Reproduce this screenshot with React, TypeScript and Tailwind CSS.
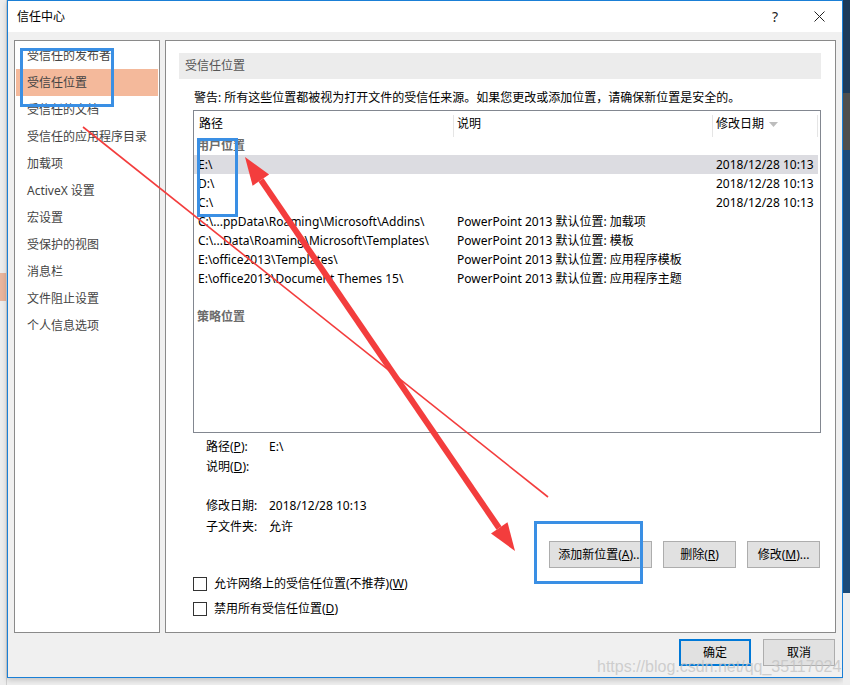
import React from 'react'

const navItems = [
  '受信任的发布者',
  '受信任位置',
  '受信任的文档',
  '受信任的应用程序目录',
  '加载项',
  'ActiveX 设置',
  '宏设置',
  '受保护的视图',
  '消息栏',
  '文件阻止设置',
  '个人信息选项',
]

const date = '2018/12/28 10:13'

const rows = [
  { path: 'E:\\', desc: '', date, selected: true },
  { path: 'D:\\', desc: '', date },
  { path: 'C:\\', desc: '', date },
  { path: 'C:\\...ppData\\Roaming\\Microsoft\\Addins\\', desc: 'PowerPoint 2013 默认位置: 加载项', date: '' },
  { path: 'C:\\...Data\\Roaming\\Microsoft\\Templates\\', desc: 'PowerPoint 2013 默认位置: 模板', date: '' },
  { path: 'E:\\office2013\\Templates\\', desc: 'PowerPoint 2013 默认位置: 应用程序模板', date: '' },
  { path: 'E:\\office2013\\Document Themes 15\\', desc: 'PowerPoint 2013 默认位置: 应用程序主题', date: '' },
]

function Btn({ children, className = '' }: { children: React.ReactNode; className?: string }) {
  return (
    <div className={`h-[27px] flex items-center justify-center bg-[#e1e1e1] border border-[#adadad] text-black ${className}`}>
      {children}
    </div>
  )
}

function Checkbox({ children }: { children: React.ReactNode }) {
  return (
    <div className="h-[21px] flex items-center">
      <div className="w-[14px] h-[14px] border border-[#333] bg-white" />
      <span className="ml-[7px]">{children}</span>
    </div>
  )
}

function Annotations() {
  // blue boxes and red arrows drawn over the screenshot
  return (
    <svg className="absolute inset-0 pointer-events-none" width="850" height="685">
      <g fill="none" stroke="#3a8fe4" strokeWidth="3">
        <rect x="21.5" y="49.5" width="91" height="56" />
        <rect x="198.5" y="139.5" width="38" height="76" />
        <rect x="535.5" y="522.5" width="106" height="60" />
      </g>
      <line x1="83" y1="127" x2="548" y2="497" stroke="#f33d3d" strokeWidth="1.6" />
      <line x1="261" y1="180" x2="499" y2="528" stroke="#f33d3d" strokeWidth="6" />
      <polygon points="245,157 252.6,185.8 269.1,174.5" fill="#f33d3d" />
      <polygon points="515,551 491,533.6 507.5,522.3" fill="#f33d3d" />
    </svg>
  )
}

export default function App() {
  return (
    <div className="relative w-[850px] h-[685px] overflow-hidden bg-[#efefef] flex font-['Noto_Sans','Noto_Sans_CJK_SC',sans-serif] text-[12px] leading-[16px] text-black">
      {/* desktop on the left */}
      <div className="w-[7px] h-full flex flex-col bg-[#ededed] border-r border-[#d0d0d0]">
        <div className="h-[273px]" />
        <div className="h-[28px] w-[6px] bg-[#e8b59d]" />
      </div>

      {/* dialog window */}
      <div className="w-[836px] h-[678px] border border-[#1a7fd6] bg-[#f0f0f0] flex flex-col shadow-[0_2px_6px_rgba(0,0,0,0.2)]">
        <div className="h-[31px] bg-white flex items-center pl-[9px] pr-[15px]">
          <span className="text-[12px]">信任中心</span>
          <span className="ml-auto mr-[36px] text-[14px] text-[#222]">?</span>
          <svg width="11" height="11" viewBox="0 0 11 11" className="mr-[2px]">
            <path d="M0.5 0.5 L10.5 10.5 M10.5 0.5 L0.5 10.5" stroke="#222" strokeWidth="1" />
          </svg>
        </div>

        <div className="flex-1 flex flex-col px-[6px] pt-[8px]">
          <div className="h-[593px] flex gap-[5px]">
            {/* left nav */}
            <div className="w-[147px] border border-[#8a8a8a] bg-white pt-[1px] px-[1px]">
              {navItems.map((t, i) => (
                <div
                  key={t}
                  className={`h-[27px] flex items-center pl-[11px] text-[#444] ${i === 1 ? 'bg-[#f4b99b]' : ''}`}
                >
                  {t}
                </div>
              ))}
            </div>

            {/* right content */}
            <div className="w-[671px] border border-[#8a8a8a] bg-white pt-[12px] pl-[13px] pr-[14px]">
              <div className="h-[26px] bg-[#ececec] flex items-center pl-[6px] text-[#555]">受信任位置</div>
              <div className="mt-[11px] pl-[15px] h-[16px]">
                警告: 所有这些位置都被视为打开文件的受信任来源。如果您更改或添加位置，请确保新位置是安全的。
              </div>

              <div className="mt-[4px] ml-[14px] w-[628px] h-[323px] border border-[#828790]">
                <div className="h-[25px] flex items-center pt-[1px]">
                  <div className="w-[260px] h-full flex items-center">
                    <span className="pl-[5px]">路径</span>
                    <div className="ml-auto w-px h-[22px] mt-[3px] bg-[#e5e5e5]" />
                  </div>
                  <div className="w-[259px] h-full flex items-center">
                    <span className="pl-[3px]">说明</span>
                    <div className="ml-auto w-px h-[22px] mt-[3px] bg-[#e5e5e5]" />
                  </div>
                  <div className="w-[105px] h-full flex items-center">
                    <span className="pl-[3px]">修改日期</span>
                    <svg width="9" height="5" viewBox="0 0 9 5" className="ml-[5px]">
                      <path d="M0 0 L9 0 L4.5 5 Z" fill="#bdbdbd" />
                    </svg>
                    <div className="ml-auto w-px h-[22px] mt-[3px] bg-[#e5e5e5]" />
                  </div>
                </div>

                <div className="h-[19px] flex items-center pl-[3px] text-[#6b6b6b] font-semibold">用户位置</div>
                {rows.map((r) => (
                  <div
                    key={r.path}
                    className={`h-[19px] w-[624px] flex items-center whitespace-nowrap ${r.selected ? 'bg-[#dcdce1]' : ''}`}
                  >
                    <div className="w-[260px] pl-[4px] overflow-hidden">{r.path}</div>
                    <div className="w-[259px] pl-[3px]">{r.desc}</div>
                    <div className="pl-[3px]">{r.date}</div>
                  </div>
                ))}
                <div className="h-[19px]" />
                <div className="h-[19px] flex items-center pl-[3px] text-[#6b6b6b] font-semibold">策略位置</div>
              </div>

              <div className="pl-[27px] mt-[4px]">
                <div className="h-[20px] flex items-center">
                  <span className="w-[63px]">
                    路径(<span className="underline">P</span>):
                  </span>
                  <span>E:\</span>
                </div>
                <div className="h-[20px] flex items-center">
                  <span className="w-[63px]">
                    说明(<span className="underline">D</span>):
                  </span>
                </div>
                <div className="h-[18px]" />
                <div className="h-[21px] flex items-center">
                  <span className="w-[63px]">修改日期:</span>
                  <span>{date}</span>
                </div>
                <div className="h-[21px] flex items-center">
                  <span className="w-[63px]">子文件夹:</span>
                  <span>允许</span>
                </div>
              </div>

              <div className="mt-[4px] flex justify-end gap-[11px] pr-[1px]">
                <Btn className="w-[103px]">
                  添加新位置(<span className="underline">A</span>)...
                </Btn>
                <Btn className="w-[73px]">
                  删除(<span className="underline">R</span>)
                </Btn>
                <Btn className="w-[73px]">
                  修改(<span className="underline">M</span>)...
                </Btn>
              </div>

              <div className="mt-[5px] ml-[14px] flex flex-col gap-[4px]">
                <Checkbox>
                  允许网络上的受信任位置(不推荐)(<span className="underline">W</span>)
                </Checkbox>
                <Checkbox>
                  禁用所有受信任位置(<span className="underline">D</span>)
                </Checkbox>
              </div>
            </div>
          </div>

          <div className="mt-[6px] flex justify-end gap-[12px] pr-[1px]">
            <Btn className="w-[72px] !border-2 !border-[#0078d7]">确定</Btn>
            <Btn className="w-[72px]">取消</Btn>
          </div>
        </div>
      </div>

      {/* desktop on the right */}
      <div className="flex-1 h-full flex flex-col">
        <div className="h-[93px] bg-[#1d3b5b]" />
        <div className="h-[57px] bg-[#4e4e4e]" />
        <div className="h-[443px] bg-[#1b4a78]" />
        <div className="flex-1 bg-[#efefef]" />
      </div>

      <div className="absolute left-[597px] top-[657px] font-['Liberation_Sans',sans-serif] text-[16px] leading-[20px] text-[#c4c4c4]/80 whitespace-nowrap">
        https://blog.csdn.net/qq_35117024
      </div>

      <Annotations />
    </div>
  )
}
